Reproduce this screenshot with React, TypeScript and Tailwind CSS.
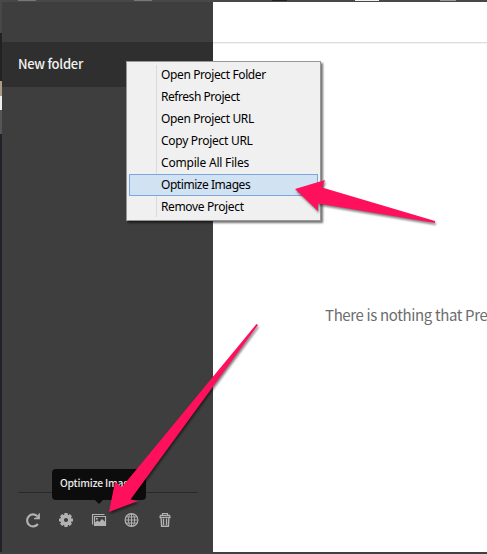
const menuItems = [
  { label: 'Open Project Folder', tracking: 'tracking-[-0.38px]' },
  { label: 'Refresh Project', tracking: 'tracking-[-0.45px]' },
  { label: 'Open Project URL', tracking: 'tracking-[-0.38px]' },
  { label: 'Copy Project URL', tracking: 'tracking-[-0.28px]' },
  { label: 'Compile All Files', tracking: 'tracking-[-0.2px]' },
  { label: 'Optimize Images', tracking: 'tracking-[-0.45px]', active: true },
  { label: 'Remove Project', tracking: 'tracking-[-0.36px]' },
];

function RefreshIcon() {
  return (
    <svg className="size-4" viewBox="0 0 16 16" fill="none">
      <path d="M12.9 12A6 6 0 1 1 12.6 4.400" stroke="currentColor" strokeWidth="2.1" />
      <path d="M14.9 1.300v6H9V6l3-.7L14 1.300Z" fill="currentColor" />
    </svg>
  );
}

function GearIcon() {
  return (
    <svg className="size-4" viewBox="0 0 16 16" fill="none" stroke="currentColor">
      <circle cx="8" cy="8" r="3.900" strokeWidth="3.600" />
      <path
        d="M8 1v3M8 12v3M1 8h3M12 8h3M3.100 3.100 5 5M11 11l1.900 1.900M3.100 12.900 5 11M11 5l1.900-1.900"
        strokeWidth="3.200"
      />
    </svg>
  );
}

function ImagesIcon() {
  return (
    <svg className="size-4" viewBox="0 0 16 16" fill="none">
      <path d="M1.500 12.500V2.500h12" stroke="currentColor" strokeWidth="1.1" />
      <path d="M3.500 4.500h11v9h-11Z" stroke="currentColor" strokeWidth="1.2" />
      <path d="M4 13v-2.500l2.300-2 2 1.600L11 7l3.500 3.200V13Z" fill="currentColor" />
      <circle cx="5.800" cy="6.800" r="1" fill="currentColor" />
    </svg>
  );
}

function GlobeIcon() {
  return (
    <svg className="size-4" viewBox="0 0 16 16" fill="none" stroke="currentColor" strokeWidth="1">
      <circle cx="7.500" cy="8" r="6.400" strokeWidth="1.2" />
      <ellipse cx="7.500" cy="8" rx="3.200" ry="6.300" />
      <path d="M7.500 2v12M1.500 8h12M2.300 5h10.400M2.300 11h10.400" />
    </svg>
  );
}

function TrashIcon() {
  return (
    <svg className="size-4" viewBox="0 0 16 16" fill="none" stroke="currentColor">
      <path d="M5.500 3V1.500h5V3" strokeWidth="1.2" />
      <path d="M3 5.300l.4-2h9.200l.4 2Z" strokeWidth="1.2" />
      <path d="M4.100 6l.500 8.300h6.800l.500-8.300" strokeWidth="1.4" />
      <path d="M6.500 6.500V13M9.500 6.500V13" strokeWidth="1.3" />
    </svg>
  );
}

function ContextMenu() {
  return (
    <div className="absolute left-[126px] top-[61px] h-[160px] w-[195px] border border-[#979797] bg-[#f0f0f0] shadow-[2px_2px_2px_rgba(0,0,0,0.55)]">
      <div className="absolute bottom-[3px] left-[29px] top-[3px] w-px bg-[#dadada]" />
      <ul className="relative p-[2px]">
        {menuItems.map((item) => (
          <li
            key={item.label}
            className={
              'flex h-[22px] items-center whitespace-nowrap border pl-[31px] font-["Noto_Sans","Open_Sans",sans-serif] text-xs text-black ' +
              item.tracking +
              (item.active ? ' border-[#7da7dc] bg-[#d1e2f2]' : ' border-transparent')
            }
          >
            <span>{item.label}</span>
          </li>
        ))}
      </ul>
    </div>
  );
}

function Arrows() {
  return (
    <svg
      className="pointer-events-none absolute inset-0 h-[554px] w-[487px] drop-shadow-[1px_2px_1px_rgba(0,0,0,0.5)]"
      viewBox="0 0 487 554"
      fill="#ff105c"
    >
      <path d="M295 189 325 180 322 187.500 435 221 435 223 318 203.500 318 211Z" />
      <path d="M109 512 115 482 122 487 256.500 324 258 325 130.500 499.500 138 501Z" />
    </svg>
  );
}

export default function App() {
  return (
    <div className="relative flex h-[554px] w-[487px] flex-col overflow-hidden bg-white">
      <div className="flex h-[2px] shrink-0 bg-[#484848]">
        <div className="ml-[18px] h-px w-[18px] bg-[#777]" />
        <div className="ml-[98px] h-px w-[18px] bg-[#777]" />
        <div className="ml-[120px] h-px w-[15px] bg-[#222]" />
        <div className="ml-[68px] h-px w-[24px] bg-[#f0f0f0]" />
        <div className="ml-[61px] h-px w-[16px] bg-[#999]" />
      </div>
      <div className="flex min-h-0 flex-1">
        <div className="w-[2px] shrink-0 bg-[#20222a]">
          <div className="h-[31px] bg-[#484848]" />
          <div className="h-[48px] bg-[#222]" />
          <div className="h-[15px] bg-[#ac9b88]" />
          <div className="h-[14px] bg-[#eee]" />
          <div className="h-[24px] bg-[#555]" />
        </div>
        <aside className="flex w-[211px] shrink-0 flex-col bg-[#3e3e3e]">
          <div className="h-10" />
          <div className="flex h-[45px] items-center bg-[#2f2f2f] pb-[2px] pl-4">
            <span className='font-["Noto_Sans_CJK_SC",sans-serif] text-[13px] font-medium tracking-[-0.27px] text-[#f2f2f2]'>
              New folder
            </span>
          </div>
          <div className="flex-1" />
          <div className="mx-4 h-px w-[180px] bg-[#292929]" />
          <div className="flex h-[59px] items-start gap-[17px] pl-[23px] pt-[19px] text-[#b2b2b2]">
            <RefreshIcon />
            <GearIcon />
            <ImagesIcon />
            <GlobeIcon />
            <TrashIcon />
          </div>
        </aside>
        <main className="flex min-w-0 flex-1 flex-col overflow-hidden bg-white">
          <div className="h-10 shrink-0" />
          <div className="h-[2px] shrink-0 border-t border-[#dedede] bg-[#f3f3f3]" />
          <p className='mt-[259px] whitespace-nowrap pl-[112px] font-["Noto_Sans_CJK_SC",sans-serif] text-[15px] leading-6 tracking-[-0.36px] text-[#6c6c6c]'>
            There is nothing that Pre
          </p>
        </main>
      </div>
      <div className="h-[2px] shrink-0 bg-[#404042]" />

      <ContextMenu />
      <div className="absolute left-[52px] top-[469px] flex h-[31px] w-[94px] items-center whitespace-nowrap rounded bg-[#0c0c0c] pb-[3px] pl-2">
        <span className='font-["Noto_Sans_CJK_SC",sans-serif] text-[10.3px] font-medium tracking-[-0.2px] text-[#e8e8e8]'>
          Optimize Images
        </span>
        <div className="absolute left-[43px] top-[31px] border-x-4 border-t-4 border-x-transparent border-t-[#0c0c0c]" />
      </div>
      <Arrows />
    </div>
  );
}
